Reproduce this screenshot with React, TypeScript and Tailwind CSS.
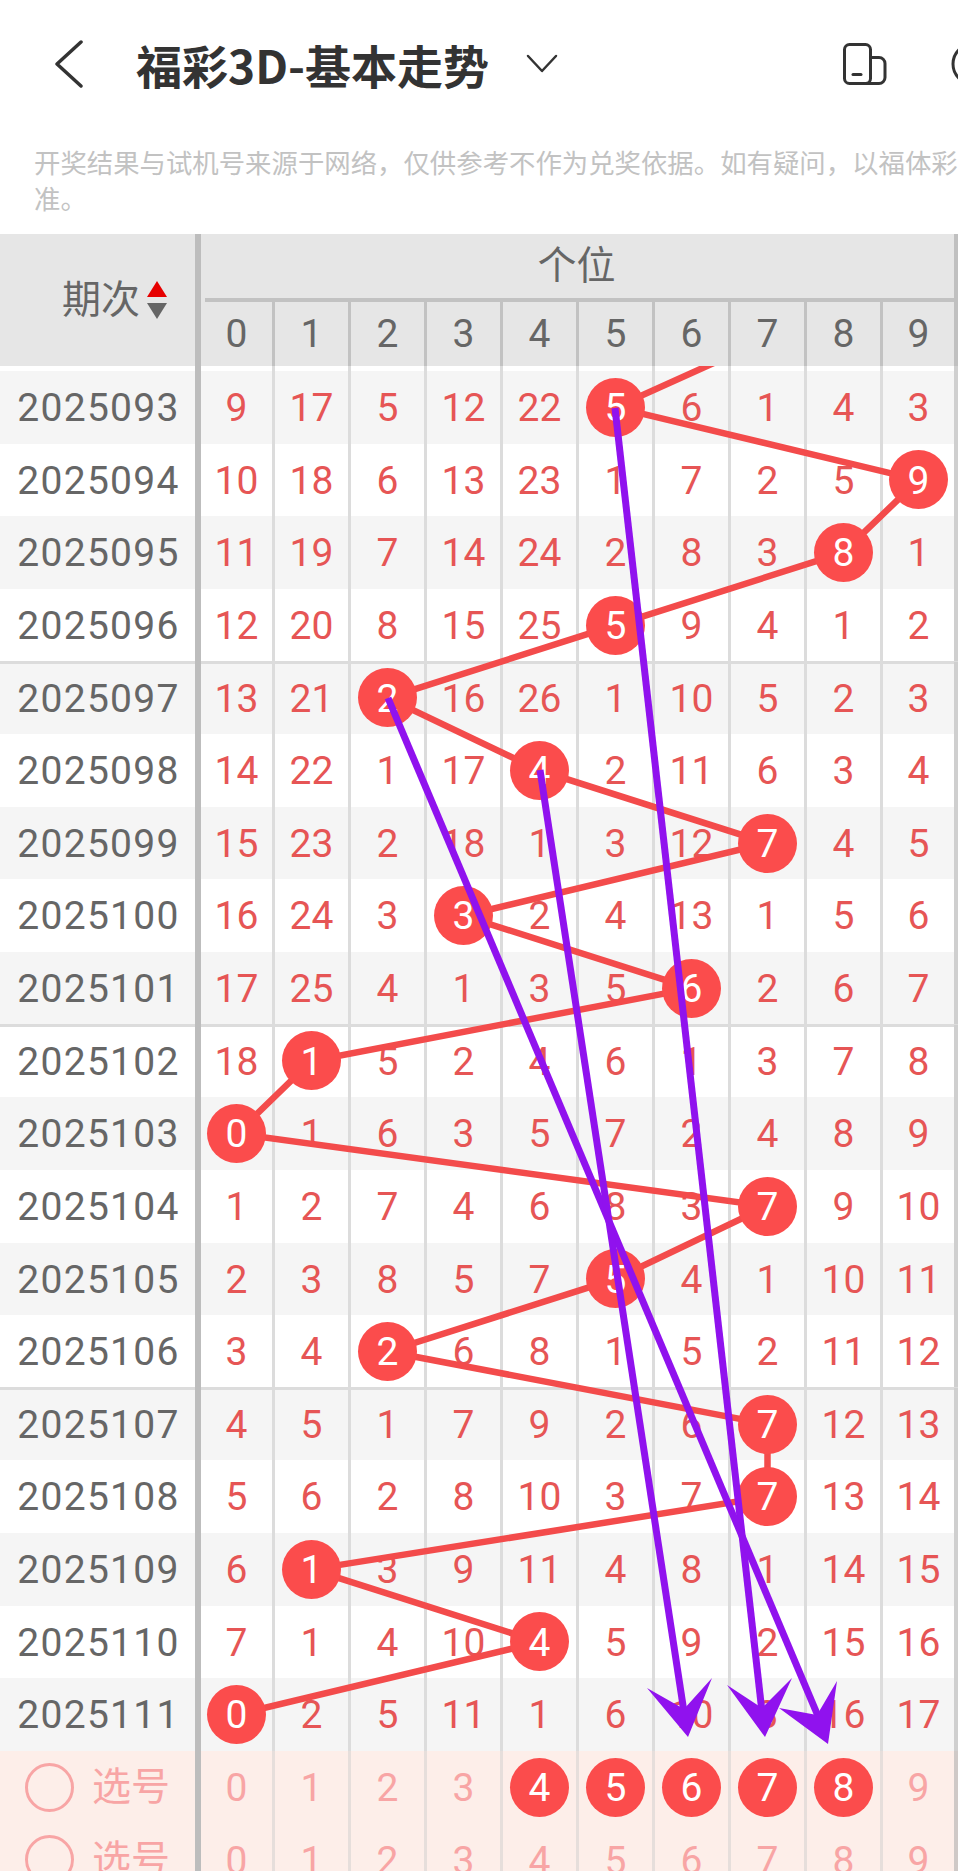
const font = "font-['Roboto','Noto_Sans_CJK_SC',sans-serif]";

// [期次, 当期号码, 遗漏值]
const ROWS: [string, number, number[]][] = [
  ["2025093", 5, [9, 17, 5, 12, 22, 5, 6, 1, 4, 3]],
  ["2025094", 9, [10, 18, 6, 13, 23, 1, 7, 2, 5, 9]],
  ["2025095", 8, [11, 19, 7, 14, 24, 2, 8, 3, 8, 1]],
  ["2025096", 5, [12, 20, 8, 15, 25, 5, 9, 4, 1, 2]],
  ["2025097", 2, [13, 21, 2, 16, 26, 1, 10, 5, 2, 3]],
  ["2025098", 4, [14, 22, 1, 17, 4, 2, 11, 6, 3, 4]],
  ["2025099", 7, [15, 23, 2, 18, 1, 3, 12, 7, 4, 5]],
  ["2025100", 3, [16, 24, 3, 3, 2, 4, 13, 1, 5, 6]],
  ["2025101", 6, [17, 25, 4, 1, 3, 5, 6, 2, 6, 7]],
  ["2025102", 1, [18, 1, 5, 2, 4, 6, 1, 3, 7, 8]],
  ["2025103", 0, [0, 1, 6, 3, 5, 7, 2, 4, 8, 9]],
  ["2025104", 7, [1, 2, 7, 4, 6, 8, 3, 7, 9, 10]],
  ["2025105", 5, [2, 3, 8, 5, 7, 5, 4, 1, 10, 11]],
  ["2025106", 2, [3, 4, 2, 6, 8, 1, 5, 2, 11, 12]],
  ["2025107", 7, [4, 5, 1, 7, 9, 2, 6, 7, 12, 13]],
  ["2025108", 7, [5, 6, 2, 8, 10, 3, 7, 7, 13, 14]],
  ["2025109", 1, [6, 1, 3, 9, 11, 4, 8, 1, 14, 15]],
  ["2025110", 4, [7, 1, 4, 10, 4, 5, 9, 2, 15, 16]],
  ["2025111", 0, [0, 2, 5, 11, 1, 6, 10, 3, 16, 17]],
];

const COL_X = [236.5, 311.5, 387.5, 463.5, 539.5, 615.5, 691.5, 767.5, 843, 918.5];
const rowY = (i: number) => 371 + 72.63 * (i + 0.5);
const trend = [
  "778,334",
  ...ROWS.map((r, i) => `${COL_X[r[1]]},${rowY(i)}`),
].join(" ");

function Ball({ n }: { n: number }) {
  return (
    <span className="relative z-20 flex h-[59px] w-[59px] shrink-0 items-center justify-center rounded-full bg-[#fb4c4c] pt-[2px] text-white">
      {n}
    </span>
  );
}

// 十列数字格，分隔线颜色由外面传入
function Cells({ render, sep }: { render: (c: number) => React.ReactNode; sep: string }) {
  return (
    <div className="flex flex-1">
      {Array.from({ length: 10 }).map((_, c) => (
        <div
          key={c}
          className={`flex items-center justify-center ${sep} ${c === 0 ? "w-[74px]" : c === 9 ? "w-[71px]" : "w-[76px]"} ${c === 9 ? "" : "border-r-[3px]"}`}
        >
          {render(c)}
        </div>
      ))}
    </div>
  );
}

function PickRow({ balls }: { balls: number[] }) {
  return (
    <div className="flex h-[72.63px] shrink-0 bg-[#fdeee9] border-r-[4px] border-[#cfc9c7]">
      <div className="flex w-[201px] shrink-0 items-center border-r-[6px] border-[#bdbdbd] pl-[25px] text-[#f8a5a5]">
        <span className="h-[49px] w-[49px] rounded-full border-[3px] border-[#f8a5a5]" />
        <span className="ml-[18px] text-[39px]">选号</span>
      </div>
      <Cells
        sep="border-[#e6dedb]"
        render={(c) => (balls.includes(c) ? <Ball n={c} /> : <span className="pt-[2px] text-[#f8a5a5]">{c}</span>)}
      />
    </div>
  );
}

export default function App() {
  return (
    <div className={`relative h-[1871px] w-[958px] overflow-hidden bg-white text-[39px] ${font}`}>
      <div className="flex h-[128px] items-center">
        <svg className="ml-[54px] shrink-0" width="30" height="48" viewBox="0 0 30 48" fill="none" stroke="#333" strokeWidth="3.5" strokeLinecap="round" strokeLinejoin="round">
          <path d="M27 2 L3 24 L27 46" />
        </svg>
        <h1 className="ml-[52px] w-[349px] shrink-0 whitespace-nowrap text-[46px] font-bold text-[#333] font-['Noto_Sans_CJK_SC',sans-serif]">福彩3D-基本走势</h1>
        <svg className="ml-[41px] shrink-0" width="32" height="20" viewBox="0 0 32 20" fill="none" stroke="#333" strokeWidth="2.5" strokeLinecap="round" strokeLinejoin="round">
          <path d="M2 2 L16 17 L30 2" />
        </svg>
        <svg className="ml-[285px] shrink-0" width="44" height="42" viewBox="0 0 44 42" fill="none" stroke="#333" strokeWidth="3" strokeLinejoin="round" strokeLinecap="round">
          <rect x="1.5" y="1.5" width="26" height="39" rx="5" />
          <path d="M27.5 14.5 H36 a6 6 0 0 1 6 6 V34.500 a6 6 0 0 1 -6 6 H22" />
          <path d="M10 31.500 H18" />
        </svg>
        <svg className="ml-[64px] shrink-0" width="44" height="44" viewBox="0 0 44 44" fill="none" stroke="#333" strokeWidth="3">
          <circle cx="22" cy="22" r="20" />
        </svg>
      </div>
      <p className="mt-[16px] h-[90px] whitespace-nowrap pl-[34px] text-[26.4px] leading-[36px] text-[#c2c2c2] font-['Noto_Sans_CJK_SC',sans-serif]">
        开奖结果与试机号来源于网络，仅供参考不作为兑奖依据。如有疑问，以福体彩
        <br />
        准。
      </p>

      {/* 表头 */}
      <div className="flex h-[132px] border-r-[4px] border-[#c0c0c0] bg-[#e6e6e6] text-[#666]">
        <div className="flex w-[201px] shrink-0 items-center justify-end border-r-[6px] border-[#bdbdbd] pr-[28px]">
          <span className="text-[39px] leading-none">期次</span>
          <svg className="ml-[7px]" width="20" height="38" viewBox="0 0 20 38">
            <path d="M10 0 L20 16 H0 Z" fill="#e60000" />
            <path d="M10 38 L20 22 H0 Z" fill="#666" />
          </svg>
        </div>
        <div className="flex flex-1 flex-col">
          <div className="flex h-[64px] items-center justify-center pr-[2px] text-[39px]">个位</div>
          <div className="ml-1 h-1 bg-[#c2c2c2]" />
          <Cells sep="border-[#c2c2c2]" render={(c) => <span>{c}</span>} />
        </div>
      </div>
      <div className="flex h-[5px] border-r-[4px] border-[#cfcfcf]">
        <div className="w-[201px] shrink-0 border-r-[6px] border-[#bdbdbd]" />
        <Cells sep="border-[#dcdcdc]" render={() => null} />
      </div>

      {/* 走势行 */}
      {ROWS.map((r, i) => (
        <div
          key={r[0]}
          className={`flex h-[72.63px] shrink-0 border-r-[4px] border-[#cfcfcf] ${i % 2 === 0 ? "bg-[#f5f5f5]" : "bg-white"} ${i % 5 === 4 ? "shadow-[inset_0_2px_0_#dcdcdc,0_-1px_0_#dcdcdc]" : ""}`}
        >
          <div className="flex w-[201px] shrink-0 items-center justify-center border-r-[6px] border-[#bdbdbd] pt-[2px] pl-[2px] tracking-[1.3px] text-[#666]">
            {r[0]}
          </div>
          <Cells
            sep="border-[#dcdcdc]"
            render={(c) => (c === r[1] ? <Ball n={c} /> : <span className="pt-[2px] text-[#e65555]">{r[2][c]}</span>)}
          />
        </div>
      ))}

      <PickRow balls={[4, 5, 6, 7, 8]} />
      <PickRow balls={[]} />

      {/* 红色连线压在数字上、球下面，从表头下沿裁掉 */}
      <svg className="pointer-events-none absolute left-0 top-[366px] z-10" width="958" height="1505" viewBox="0 366 958 1505">
        <polyline points={trend} fill="none" stroke="#f34b4b" strokeWidth="6.500" />
      </svg>

      {/* 紫色箭头 */}
      <svg className="pointer-events-none absolute left-0 top-0 z-30" width="958" height="1871" fill="#9012ee" stroke="#9012ee">
        <line x1="615" y1="408" x2="762" y2="1712" strokeWidth="7" />
        <line x1="388" y1="698" x2="818" y2="1716" strokeWidth="7" />
        <line x1="540" y1="770" x2="684" y2="1712" strokeWidth="7" />
        <polygon points="688,1737 647,1688 684,1709 712,1678" stroke="none" />
        <polygon points="765,1737 727,1685 762,1708 792,1678" stroke="none" />
        <polygon points="828,1744 779,1708 817,1715 837,1681" stroke="none" />
      </svg>
    </div>
  );
}
